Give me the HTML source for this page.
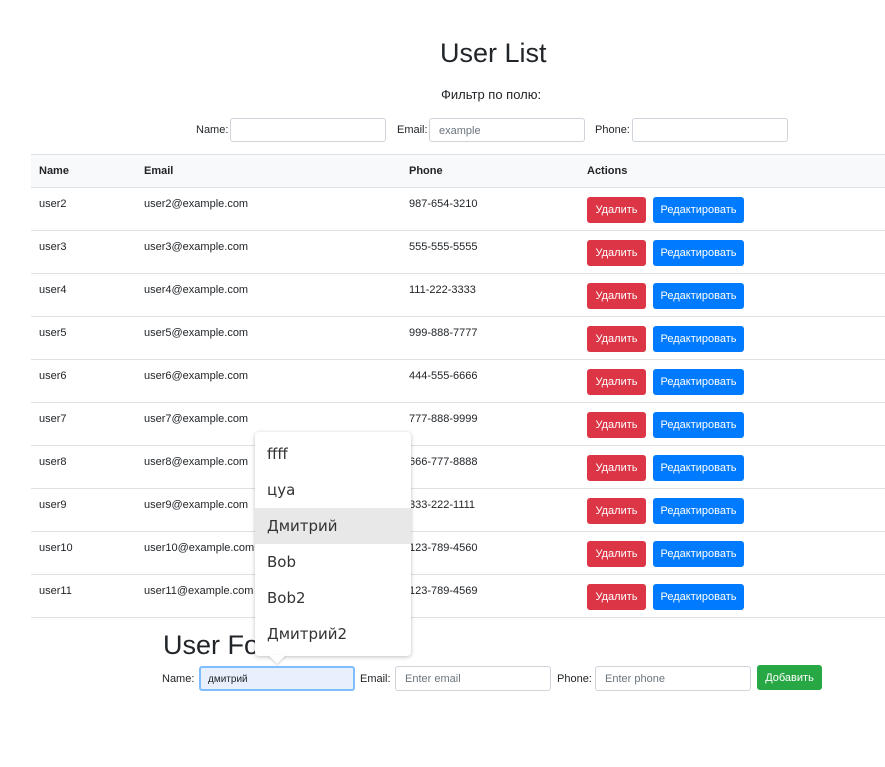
<!DOCTYPE html>
<html><head><meta charset="utf-8"><style>
*{box-sizing:border-box;margin:0;padding:0}
body{width:885px;height:767px;background:#fff;font-family:"Liberation Sans",sans-serif;color:#212529;position:relative;overflow:hidden;font-size:12px}
.a{position:absolute}
h1{position:absolute;font-weight:400;font-size:27px;line-height:1}
.inp{position:absolute;height:24px;border:1px solid #ced4da;border-radius:3px;background:#fff;font-size:11px;color:#6c757d;padding:0 9px;line-height:23px}
.lbl{position:absolute;font-size:11px}
.row{position:absolute;left:31px;width:854px;height:43px;border-bottom:1px solid #dee2e6}
.row span{position:absolute;top:10px;font-size:11px}
.btn{position:absolute;top:9px;height:26px;border-radius:3px;color:#fff;font-size:11px;line-height:27px;text-align:center}
.del{left:556px;width:59px;background:#dc3545}
.ed{left:622px;width:91px;background:#007bff}
.dd{position:absolute;left:255px;top:432px;width:156px;height:224px;background:#fff;border-radius:4px;box-shadow:0 1px 4px rgba(0,0,0,.25);font-family:"DejaVu Sans",sans-serif;font-size:15px;color:#333}
.dd div{height:36px;line-height:36px;padding-left:12px}
</style></head><body>
<h1 style="left:440px;top:40px">User List</h1>
<div class="a" style="left:441px;top:87px;font-size:13px">Фильтр по полю:</div>
<div class="lbl" style="left:196px;top:124px">Name:</div><div class="inp" style="left:230px;top:118px;width:156px"></div>
<div class="lbl" style="left:397px;top:124px">Email:</div><div class="inp" style="left:429px;top:118px;width:156px;line-height:24px">example</div>
<div class="lbl" style="left:595px;top:124px">Phone:</div><div class="inp" style="left:632px;top:118px;width:156px"></div>
<div class="row" style="top:154px;height:34px;background:#f8f9fa;border-top:1px solid #dee2e6;font-weight:bold">
<span style="left:8px;top:10px">Name</span><span style="left:113px;top:10px">Email</span><span style="left:378px;top:10px">Phone</span><span style="left:556px;top:10px">Actions</span></div>
<div class="row" style="top:188px"><span style="left:8px">user2</span><span style="left:113px">user2@example.com</span><span style="left:378px">987-654-3210</span><div class="btn del">Удалить</div><div class="btn ed">Редактировать</div></div>
<div class="row" style="top:231px"><span style="left:8px">user3</span><span style="left:113px">user3@example.com</span><span style="left:378px">555-555-5555</span><div class="btn del">Удалить</div><div class="btn ed">Редактировать</div></div>
<div class="row" style="top:274px"><span style="left:8px">user4</span><span style="left:113px">user4@example.com</span><span style="left:378px">111-222-3333</span><div class="btn del">Удалить</div><div class="btn ed">Редактировать</div></div>
<div class="row" style="top:317px"><span style="left:8px">user5</span><span style="left:113px">user5@example.com</span><span style="left:378px">999-888-7777</span><div class="btn del">Удалить</div><div class="btn ed">Редактировать</div></div>
<div class="row" style="top:360px"><span style="left:8px">user6</span><span style="left:113px">user6@example.com</span><span style="left:378px">444-555-6666</span><div class="btn del">Удалить</div><div class="btn ed">Редактировать</div></div>
<div class="row" style="top:403px"><span style="left:8px">user7</span><span style="left:113px">user7@example.com</span><span style="left:378px">777-888-9999</span><div class="btn del">Удалить</div><div class="btn ed">Редактировать</div></div>
<div class="row" style="top:446px"><span style="left:8px">user8</span><span style="left:113px">user8@example.com</span><span style="left:378px">666-777-8888</span><div class="btn del">Удалить</div><div class="btn ed">Редактировать</div></div>
<div class="row" style="top:489px"><span style="left:8px">user9</span><span style="left:113px">user9@example.com</span><span style="left:378px">333-222-1111</span><div class="btn del">Удалить</div><div class="btn ed">Редактировать</div></div>
<div class="row" style="top:532px"><span style="left:8px">user10</span><span style="left:113px">user10@example.com</span><span style="left:378px">123-789-4560</span><div class="btn del">Удалить</div><div class="btn ed">Редактировать</div></div>
<div class="row" style="top:575px"><span style="left:8px">user11</span><span style="left:113px">user11@example.com</span><span style="left:378px">123-789-4569</span><div class="btn del">Удалить</div><div class="btn ed">Редактировать</div></div>
<h1 style="left:163px;top:632px">User Form</h1>
<div class="lbl" style="left:162px;top:673px">Name:</div><div class="inp" style="left:199px;top:666px;width:156px;height:25px;background:#e8f0fe;border:2px solid #80bdff;color:#212529;font-size:10px;padding:0 7px;line-height:23px">дмитрий</div>
<div class="lbl" style="left:360px;top:673px">Email:</div><div class="inp" style="left:395px;top:666px;width:156px;height:25px;line-height:24px">Enter email</div>
<div class="lbl" style="left:557px;top:673px">Phone:</div><div class="inp" style="left:595px;top:666px;width:156px;height:25px;line-height:24px">Enter phone</div>
<div class="a" style="left:757px;top:665px;width:65px;height:25px;background:#28a745;border-radius:3px;color:#fff;font-size:11px;line-height:26px;text-align:center">Добавить</div>
<div class="dd"><div style="margin-top:4px">ffff</div><div>цуа</div><div style="background:#e8e8e8">Дмитрий</div><div>Bob</div><div>Bob2</div><div>Дмитрий2</div></div>
<div class="a" style="left:268px;top:655px;width:0;height:0;border-left:9px solid transparent;border-right:9px solid transparent;border-top:9px solid #fff;filter:drop-shadow(0 1px 1px rgba(0,0,0,.2))"></div>
</body></html>
